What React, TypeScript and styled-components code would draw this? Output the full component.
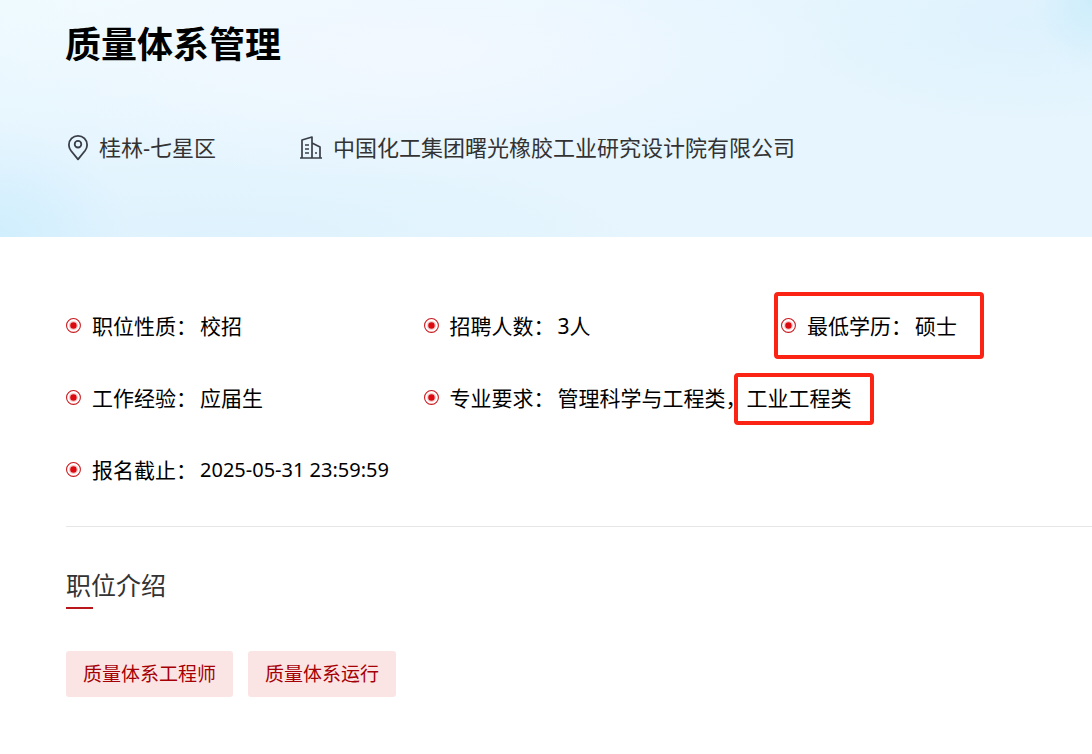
import React from "react";
import styled, { createGlobalStyle } from "styled-components";

const GlobalStyle = createGlobalStyle`
  * { box-sizing: border-box; }
  body {
    margin: 0;
    background: #fff;
    color: #000;
    font-family: "Noto Sans", "Noto Sans CJK SC", sans-serif;
  }
  h1, h2, p, ul, dl, dd, dt { margin: 0; padding: 0; }
`;

const Header = styled.header`
  min-height: 237px;
  padding: 18px 65px 73px;
  background:
    radial-gradient(ellipse 60px 70px at 100% 0%, #cdedfb 0%, rgba(205, 237, 251, 0) 100%),
    radial-gradient(ellipse 130px 110px at 0% 100%, #d0eefd 0%, rgba(208, 238, 253, 0) 100%),
    radial-gradient(ellipse 420px 130px at 38% 22%, #f2f8ff 0%, rgba(242, 248, 255, 0) 100%),
    radial-gradient(ellipse 560px 150px at 10% 0%, #f0fbfe 0%, rgba(240, 251, 254, 0) 100%),
    radial-gradient(ellipse 240px 100px at 94% 10%, #def2fd 0%, rgba(222, 242, 253, 0) 100%),
    radial-gradient(ellipse 420px 90px at 20% 100%, #def2fd 0%, rgba(222, 242, 253, 0) 100%),
    #e6f5fe;
`;

const Title = styled.h1`
  font-size: 36px;
  line-height: 54px;
  font-weight: 700;
`;

const MetaRow = styled.div`
  display: flex;
  flex-wrap: wrap;
  gap: 12px 83px;
  margin-top: 58px;
`;

const Meta = styled.p`
  display: flex;
  align-items: center;
  gap: 10px;
  color: #333;
  font-size: 22px;
  line-height: 34px;

  svg {
    flex: none;
  }
`;

const Content = styled.main`
  padding: 73px 0 56px 66px;
`;

const Details = styled.dl`
  display: grid;
  grid-template-columns: minmax(0, 23fr) minmax(0, 23fr) minmax(0, 20fr);
  row-gap: 40px;
  padding-bottom: 40px;
  border-bottom: 1px solid #e6e6e6;
`;

const Detail = styled.div<{ $newRow?: boolean }>`
  position: relative;
  display: flex;
  align-items: center;
  gap: 3px;
  justify-self: start;
  grid-column-start: ${(p) => (p.$newRow ? 1 : "auto")};
  white-space: nowrap;
  font-size: 21px;
  line-height: 32px;
`;

const Label = styled.dt`
  display: flex;
  align-items: center;
  gap: 10px;
`;

const Value = styled.dd<{ $numeric?: boolean }>`
  font-size: ${(p) => (p.$numeric ? 20 : 21)}px;
`;

const Marked = styled.span`
  position: relative;
`;

const Frame = styled.span<{ $inset: string }>`
  position: absolute;
  inset: ${(p) => p.$inset};
  border: 4px solid #fa2314;
  border-radius: 4px;
  pointer-events: none;
`;

const Intro = styled.section`
  padding-top: 39px;
`;

const Heading = styled.h2`
  color: #333;
  font-size: 25px;
  line-height: 38px;
  font-weight: 400;

  &::after {
    content: "";
    display: block;
    width: 27px;
    height: 2px;
    margin-top: 3px;
    background: #b9171a;
  }
`;

const Tags = styled.ul`
  display: flex;
  flex-wrap: wrap;
  gap: 15px;
  margin-top: 42px;
  list-style: none;
`;

const Tag = styled.li`
  padding: 8px 17px;
  border-radius: 3px;
  background: #fbe5e4;
  color: #a50006;
  font-size: 19px;
  line-height: 30px;
`;

const PinIcon = () => (
  <svg width="24" height="28" viewBox="0 0 24 28" fill="none" stroke="#3a3f47" strokeWidth="1.8" strokeLinejoin="round" aria-hidden="true">
    <path d="M13 26.4 6 17.8C4.500 15.700 3.900 13.900 3.900 11.900a9.100 9.100 0 0 1 18.200 0C22.100 13.900 21.500 15.700 20 17.800Z" />
    <circle cx="13" cy="11.200" r="3.300" />
  </svg>
);

const BuildingIcon = () => (
  <svg width="24" height="26" viewBox="0 0 24 26" fill="none" stroke="#3a3f47" strokeWidth="1.7" strokeLinejoin="round" aria-hidden="true">
    <path d="M1 24h22M3 24V6l10-3v21M13 9l8 4v11" />
    <path d="M6 11h4M6 15h4M6 19h4M16 19h2" />
  </svg>
);

const Bullet = () => (
  <svg width="16" height="16" viewBox="0 0 15 15" aria-hidden="true">
    <circle cx="7" cy="7" r="6.500" fill="#fff" stroke="#c8181c" />
    <circle cx="7" cy="7" r="4.300" fill="#f9cccc" />
    <circle cx="7" cy="7" r="3" fill="#dc0a10" />
  </svg>
);

type DetailItemProps = {
  label: string;
  numeric?: boolean;
  newRow?: boolean;
  frame?: string;
  children: React.ReactNode;
};

const DetailItem = ({ label, numeric, newRow, frame, children }: DetailItemProps) => (
  <Detail $newRow={newRow}>
    <Label>
      <Bullet />
      {label}：
    </Label>
    <Value $numeric={numeric}>{children}</Value>
    {frame && <Frame $inset={frame} />}
  </Detail>
);

const tags = ["质量体系工程师", "质量体系运行"];

export default function App() {
  return (
    <>
      <GlobalStyle />
      <Header lang="zh-CN">
        <Title>质量体系管理</Title>
        <MetaRow>
          <Meta>
            <PinIcon />
            桂林-七星区
          </Meta>
          <Meta>
            <BuildingIcon />
            中国化工集团曙光橡胶工业研究设计院有限公司
          </Meta>
        </MetaRow>
      </Header>
      <Content lang="zh-CN">
        <Details>
          <DetailItem label="职位性质">校招</DetailItem>
          <DetailItem label="招聘人数">3人</DetailItem>
          <DetailItem label="最低学历" frame="-18px -27px -17px -7px">硕士</DetailItem>
          <DetailItem label="工作经验">应届生</DetailItem>
          <DetailItem label="专业要求">
            管理科学与工程类，
            <Marked>
              工业工程类
              <Frame $inset="-11px -22px -13px -13px" />
            </Marked>
          </DetailItem>
          <DetailItem label="报名截止" numeric newRow>2025-05-31 23:59:59</DetailItem>
        </Details>
        <Intro>
          <Heading>职位介绍</Heading>
          <Tags>
            {tags.map((tag) => (
              <Tag key={tag}>{tag}</Tag>
            ))}
          </Tags>
        </Intro>
      </Content>
    </>
  );
}
